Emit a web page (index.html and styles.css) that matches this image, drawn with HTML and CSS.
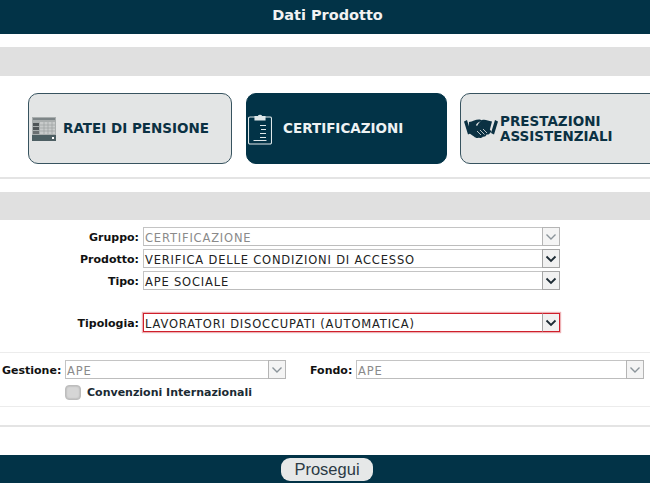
FILE: index.html
```html
<!DOCTYPE html>
<html lang="it">
<head>
<meta charset="utf-8">
<title>Dati Prodotto</title>
<link rel="stylesheet" href="styles.css">
</head>
<body>
<header class="topbar">Dati Prodotto</header>
<div class="band band-first"></div>
<nav class="tiles">
  <a class="tile tile-a">
    <svg class="ico-cal" viewBox="0 0 24 24" width="24" height="24">
      <rect width="24" height="24" fill="#a9aeae"/>
      <rect y="18" width="24" height="6" fill="#4d5f63"/>
      <rect x="1" y="1" width="22" height="2" fill="#7d8587"/>
      <rect x="1" y="6" width="6" height="3" fill="#4f5557"/>
      <rect x="1" y="10" width="6" height="3" fill="#4f5557"/>
      <rect x="1" y="14" width="6" height="3" fill="#6b7072"/>
      <rect x="8" y="5" width="15" height="12" fill="#c8cbcb"/>
      <path d="M8 8h15M8 11h15M8 14h15M12 5v12M16 5v12M20 5v12" stroke="#9ca1a2" stroke-width=".7" fill="none"/>
      <rect x="20" y="20" width="2" height="2" fill="#fff"/>
    </svg>
    <span class="tile-text">RATEI DI PENSIONE</span>
  </a>
  <a class="tile tile-b">
    <svg class="ico-clip" viewBox="0 0 24 32" width="24" height="32" fill="none" stroke="#dfe8ea" stroke-width="1.1">
      <path d="M7.500 4H2a1.500 1.500 0 0 0-1.500 1.500v24A1.500 1.500 0 0 0 2 31h20a1.500 1.500 0 0 0 1.500-1.500v-24A1.500 1.500 0 0 0 22 4h-5.500"/>
      <path d="M7 7V3.500h3.200a2 2 0 0 1 3.600 0H17V7z" fill="#dfe8ea"/>
      <path d="M12 12.500h6M13 16.500h5M12 20.500h6M12 24.500h6M5.500 27.500h13" stroke-width="1"/>
    </svg>
    <span class="tile-text">CERTIFICAZIONI</span>
  </a>
  <a class="tile tile-c">
    <svg class="ico-hands" viewBox="0 0 34 24" width="34" height="24">
      <path d="M0 4.500l3-1.500 4 13-3 1.500zM34 4.500l-3-1.500-4 13 3 1.500z" fill="#0b3143"/>
      <path d="M5 5c4-.5 7-3 11-2.500l3 1.500c-2 0-5 1-6.500 3-1 1.500.5 3 2.500 2l4-2.500c3 2 6 5 8.500 8l-1.500 1.500c-1 2-2.500 1.500-3.500 1.500-.5 2-2.500 2.500-3.500 2-1 1.500-3 2-4 1-1.500 1-3.500.5-5-1-2-1.500-4-3-5.500-3.500z" fill="#0b3143"/>
      <path d="M18 3c3-1 6 .5 10 1.500l-2.500 9.500c-2-2.500-4-4.500-7-6.500l-4 2.500c-1.500.5-2-.5-1-1.800 1-1.500 3-4.500 4.500-5.200z" fill="#0b3143"/>
      <path d="M13 14l4 4M16 13l4.500 4.500M19 12l4 4" stroke="#e6e8e8" stroke-width=".8" fill="none"/>
    </svg>
    <span class="tile-text">PRESTAZIONI<br>ASSISTENZIALI</span>
  </a>
</nav>
<hr class="rule-thick rule-a">
<div class="band band-second"></div>
<form class="form">
  <div class="row row-gruppo">
    <span class="label">Gruppo:</span>
    <div class="select is-disabled"><span class="value">CERTIFICAZIONE</span><span class="arrow"><svg viewBox="0 0 12 8" width="12" height="8"><path d="M1.500 1.500L6 6l4.500-4.500" fill="none" stroke="currentColor" stroke-width="1.400"/></svg></span></div>
  </div>
  <div class="row">
    <span class="label">Prodotto:</span>
    <div class="select"><span class="value">VERIFICA DELLE CONDIZIONI DI ACCESSO</span><span class="arrow"><svg viewBox="0 0 12 8" width="12" height="8"><path d="M1.500 1.500L6 6l4.500-4.500" fill="none" stroke="currentColor" stroke-width="1.800"/></svg></span></div>
  </div>
  <div class="row">
    <span class="label">Tipo:</span>
    <div class="select"><span class="value">APE SOCIALE</span><span class="arrow"><svg viewBox="0 0 12 8" width="12" height="8"><path d="M1.500 1.500L6 6l4.500-4.500" fill="none" stroke="currentColor" stroke-width="1.800"/></svg></span></div>
  </div>
  <div class="row row-tipologia">
    <span class="label">Tipologia:</span>
    <div class="select is-error"><span class="value">LAVORATORI DISOCCUPATI (AUTOMATICA)</span><span class="arrow"><svg viewBox="0 0 12 8" width="12" height="8"><path d="M1.500 1.500L6 6l4.500-4.500" fill="none" stroke="currentColor" stroke-width="1.800"/></svg></span></div>
  </div>
  <hr class="rule-thin rule-b">
  <div class="row-pair">
    <span class="label-inline">Gestione:</span>
    <div class="select select-g is-disabled"><span class="value">APE</span><span class="arrow"><svg viewBox="0 0 12 8" width="12" height="8"><path d="M1.500 1.500L6 6l4.500-4.500" fill="none" stroke="currentColor" stroke-width="1.400"/></svg></span></div>
    <span class="label-inline label-fondo">Fondo:</span>
    <div class="select select-f is-disabled"><span class="value">APE</span><span class="arrow"><svg viewBox="0 0 12 8" width="12" height="8"><path d="M1.500 1.500L6 6l4.500-4.500" fill="none" stroke="currentColor" stroke-width="1.400"/></svg></span></div>
  </div>
  <div class="row-check">
    <span class="check"></span>
    <span class="check-label">Convenzioni Internazionali</span>
  </div>
  <hr class="rule-thin rule-c">
  <hr class="rule-thick rule-d">
</form>
<footer class="bottombar"><button type="button" class="go">Prosegui</button></footer>
</body>
</html>
```

FILE: styles.css
```css
* { box-sizing: border-box; }
html, body { margin: 0; padding: 0; }
body {
  width: 650px;
  height: 483px;
  overflow: hidden;
  background: #fff;
  font-family: "DejaVu Sans", Verdana, sans-serif;
  color: #111;
}
.topbar {
  height: 34px;
  background: #023347;
  color: #f2f2f2;
  font-size: 14.500px;
  font-weight: 700;
  line-height: 30px;
  text-align: center;
  padding-left: 5px;
}
.band { height: 29px; background: #e0e0e0; }
.band-first { margin-top: 13px; }
.band-second { margin-top: 13px; height: 28px; }
.tiles {
  display: flex;
  padding: 17px 0 0 28px;
  height: 100px;
  overflow: hidden;
}
.tile {
  width: 204px;
  height: 71px;
  flex: none;
  border-radius: 10px;
  border: 1px solid #37535f;
  background: #e3e5e5;
  color: #0b3143;
  display: flex;
  align-items: center;
  font-size: 13.500px;
  font-weight: 700;
  line-height: 15px;
  white-space: nowrap;
}
.tile-a { padding-left: 3px; gap: 7px; margin-right: 14px; }
.tile-b {
  width: 201px;
  background: #023347;
  border-color: #023347;
  color: #eef2f3;
  padding-left: 1px;
  gap: 11px;
  margin-right: 13px;
}
.tile-c { width: 214px; padding-left: 3px; gap: 2px; }
.rule-thick, .rule-thin { border: 0; margin: 0; }
.rule-thick { height: 2px; background: #e4e4e4; }
.rule-thin { height: 1px; background: #ececec; }
.rule-a { margin-top: 1px; }
.form { padding-top: 7px; }
.row {
  display: flex;
  align-items: center;
  gap: 4px;
  height: 19px;
  margin-bottom: 3px;
}
.row-tipologia { margin-top: 23px; margin-bottom: 0; }
.label {
  width: 139px;
  padding-top: 2px;
  text-align: right;
  font-size: 11px;
  font-weight: 700;
}
.label-inline { font-size: 11px; font-weight: 700; padding-top: 2px; }
.select {
  width: 417px;
  height: 19px;
  flex: none;
  display: flex;
  align-items: center;
  justify-content: space-between;
  border: 1px solid #c4c4c4;
  border-bottom-color: #bdbdbd;
  background: #fff;
  font-size: 11.500px;
  letter-spacing: .82px;
  color: #222;
}
.value { padding: 2px 0 0 1px; white-space: nowrap; }
.arrow {
  width: 18px;
  height: 19px;
  margin: -1px -1px -1px 0;
  flex: none;
  display: flex;
  align-items: center;
  justify-content: center;
  border: 1px solid #a5a5a5;
  background: #f1f1f1;
  color: #1c2a33;
}
.is-disabled { color: #8a8a8a; }
.is-disabled .arrow { color: #8b949a; background: #f4f4f4; border-color: #b5b5b5; }
.row .is-error {
  border: 1px solid #cf1f2b;
  box-shadow: 0 0 1px 1px rgba(207, 31, 43, .35);
}
.row .is-error .arrow { border-color: #cf1f2b; border-left-color: #a5a5a5; }
.rule-b { margin-top: 20px; }
.row-pair {
  display: flex;
  align-items: center;
  height: 19px;
  margin-top: 7px;
  padding-left: 2px;
}
.row-pair .label-inline { width: 63px; }
.row-pair .select-g { width: 221px; }
.row-pair .label-fondo { width: 46px; margin-left: 24px; }
.row-pair .select-f { width: 288px; }
.row-check {
  display: flex;
  align-items: center;
  gap: 6px;
  height: 16px;
  margin-top: 5px;
  padding-left: 65px;
}
.check {
  width: 16px;
  height: 15px;
  border-radius: 4px;
  background: #d6d6d6;
  border: 1px solid #bdbdbd;
  box-shadow: inset 0 0 2px #999;
}
.check-label { font-size: 11px; font-weight: 700; color: #1b2a33; }
.rule-c { margin-top: 6px; }
.rule-d { margin-top: 18px; }
.bottombar {
  margin-top: 28px;
  height: 28px;
  background: #023347;
  display: flex;
  justify-content: center;
  padding-top: 3px;
}
.go {
  width: 92px;
  height: 23px;
  margin-left: 4px;
  border: 0;
  border-radius: 9px;
  background: #e6e8e8;
  color: #2b3a44;
  font-family: "Liberation Sans", Arial, sans-serif;
  font-size: 16.500px;
  padding: 0;
}
```
